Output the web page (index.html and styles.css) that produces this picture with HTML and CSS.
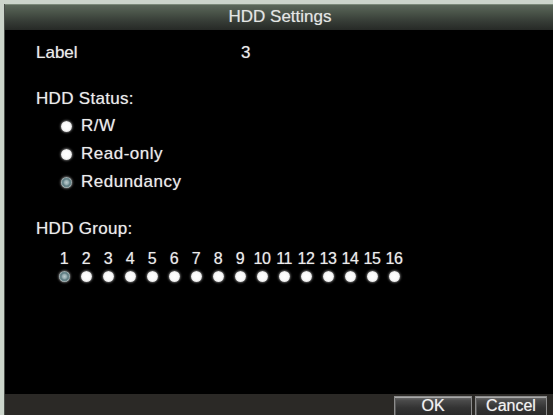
FILE: index.html
```html
<!DOCTYPE html>
<html>
<head>
<meta charset="utf-8">
<link rel="stylesheet" href="styles.css">
</head>
<body>
<div class="window">
  <div class="titlebar">HDD Settings</div>
  <div class="content">
    <div class="row-label">
      <span class="label-key">Label</span>
      <span class="label-val">3</span>
    </div>
    <div class="section-title status-title">HDD Status:</div>
    <div class="radios">
      <div class="radio-row"><span class="dot"></span><span>R/W</span></div>
      <div class="radio-row"><span class="dot"></span><span>Read-only</span></div>
      <div class="radio-row"><span class="dot selected"></span><span>Redundancy</span></div>
    </div>
    <div class="section-title group-title">HDD Group:</div>
    <div class="group-grid">
      <span class="num">1</span><span class="num">2</span><span class="num">3</span><span class="num">4</span>
      <span class="num">5</span><span class="num">6</span><span class="num">7</span><span class="num">8</span>
      <span class="num">9</span><span class="num">10</span><span class="num">11</span><span class="num">12</span>
      <span class="num">13</span><span class="num">14</span><span class="num">15</span><span class="num">16</span>
      <span class="cell"><span class="dot selected"></span></span><span class="cell"><span class="dot"></span></span>
      <span class="cell"><span class="dot"></span></span><span class="cell"><span class="dot"></span></span>
      <span class="cell"><span class="dot"></span></span><span class="cell"><span class="dot"></span></span>
      <span class="cell"><span class="dot"></span></span><span class="cell"><span class="dot"></span></span>
      <span class="cell"><span class="dot"></span></span><span class="cell"><span class="dot"></span></span>
      <span class="cell"><span class="dot"></span></span><span class="cell"><span class="dot"></span></span>
      <span class="cell"><span class="dot"></span></span><span class="cell"><span class="dot"></span></span>
      <span class="cell"><span class="dot"></span></span><span class="cell"><span class="dot"></span></span>
    </div>
  </div>
  <div class="footer">
    <div class="btn btn-ok">OK</div>
    <div class="btn btn-cancel">Cancel</div>
  </div>
</div>
</body>
</html>
```
FILE: styles.css
```css
html, body {
  margin: 0;
  padding: 0;
  width: 553px;
  height: 415px;
  overflow: hidden;
  background: #ccd5cb;
  font-family: "Liberation Sans", Arial, sans-serif;
}

.window {
  margin: 4px 0 0 4px;
  width: 549px;
  height: 411px;
  background: #000;
  display: flex;
  flex-direction: column;
  border-left: 1px solid #4a4f4a;
  box-sizing: border-box;
}

.titlebar {
  height: 26px;
  flex: none;
  background: linear-gradient(#5b675a 0%, #4a5449 30%, #363c36 65%, #262926 100%);
  border-top: 1px solid #7c8a7a;
  box-sizing: border-box;
  color: #e4e6e4;
  font-size: 17px;
  line-height: 24px;
  text-align: center;
  padding-left: 2px;
  text-shadow: 0 0 1px rgba(255,255,255,0.4);
}

.content {
  flex: 1;
  padding: 13px 0 0 31px;
  color: #ececec;
  font-size: 17px;
  line-height: 20px;
  text-shadow: 0 0 1px rgba(255,255,255,0.5);
}

.row-label {
  display: flex;
}

.label-key {
  width: 205px;
}

.section-title {
  letter-spacing: 0.3px;
}

.status-title {
  margin-top: 26px;
}

.radios {
  margin-top: 7px;
  display: flex;
  flex-direction: column;
  gap: 8px;
  padding-left: 25px;
}

.radio-row {
  display: flex;
  align-items: center;
  gap: 9px;
  letter-spacing: 0.5px;
}

.dot {
  display: inline-block;
  width: 11px;
  height: 11px;
  border-radius: 50%;
  background: radial-gradient(circle, #ffffff 0%, #fafafa 50%, #d8d8d8 80%, #9a9a9a 100%);
  box-shadow: 0 0 2px 1px rgba(255,255,255,0.35);
  flex: none;
}

.dot.selected {
  background: radial-gradient(circle, #b8cacc 0%, #9ab0b4 25%, #5e7c82 45%, #6e8a8e 58%, #d6dcdc 72%, #f0f0f0 85%, #a0a0a0 100%);
}

.group-title {
  margin-top: 27px;
}

.group-grid {
  margin-top: 10px;
  margin-left: 17px;
  display: grid;
  grid-template-columns: repeat(16, 22px);
  row-gap: 3px;
}

.num {
  font-size: 16px;
  line-height: 19px;
  text-align: center;
  letter-spacing: -0.5px;
}

.cell {
  display: flex;
  justify-content: center;
  height: 11px;
}

.footer {
  height: 21px;
  flex: none;
  background: #2b2926;
  display: flex;
  justify-content: flex-end;
  align-items: flex-start;
  gap: 3px;
  padding: 2px 6px 0 0;
  box-sizing: border-box;
  overflow: hidden;
}

.btn {
  height: 19px;
  flex: none;
  box-sizing: border-box;
  border: 1px solid #8c8c8c;
  border-bottom: none;
  background: linear-gradient(#6e6e6e 0%, #4a4a4a 20%, #333 60%, #2a2a2a 100%);
  box-shadow: inset 0 1px 0 #a8a8a8, inset 1px 0 0 #5a5a5a;
  color: #f2f2f2;
  font-size: 16px;
  line-height: 18px;
  text-align: center;
  text-shadow: 0 0 1px rgba(255,255,255,0.5);
}

.btn-ok {
  width: 78px;
}

.btn-cancel {
  width: 72px;
}
```
